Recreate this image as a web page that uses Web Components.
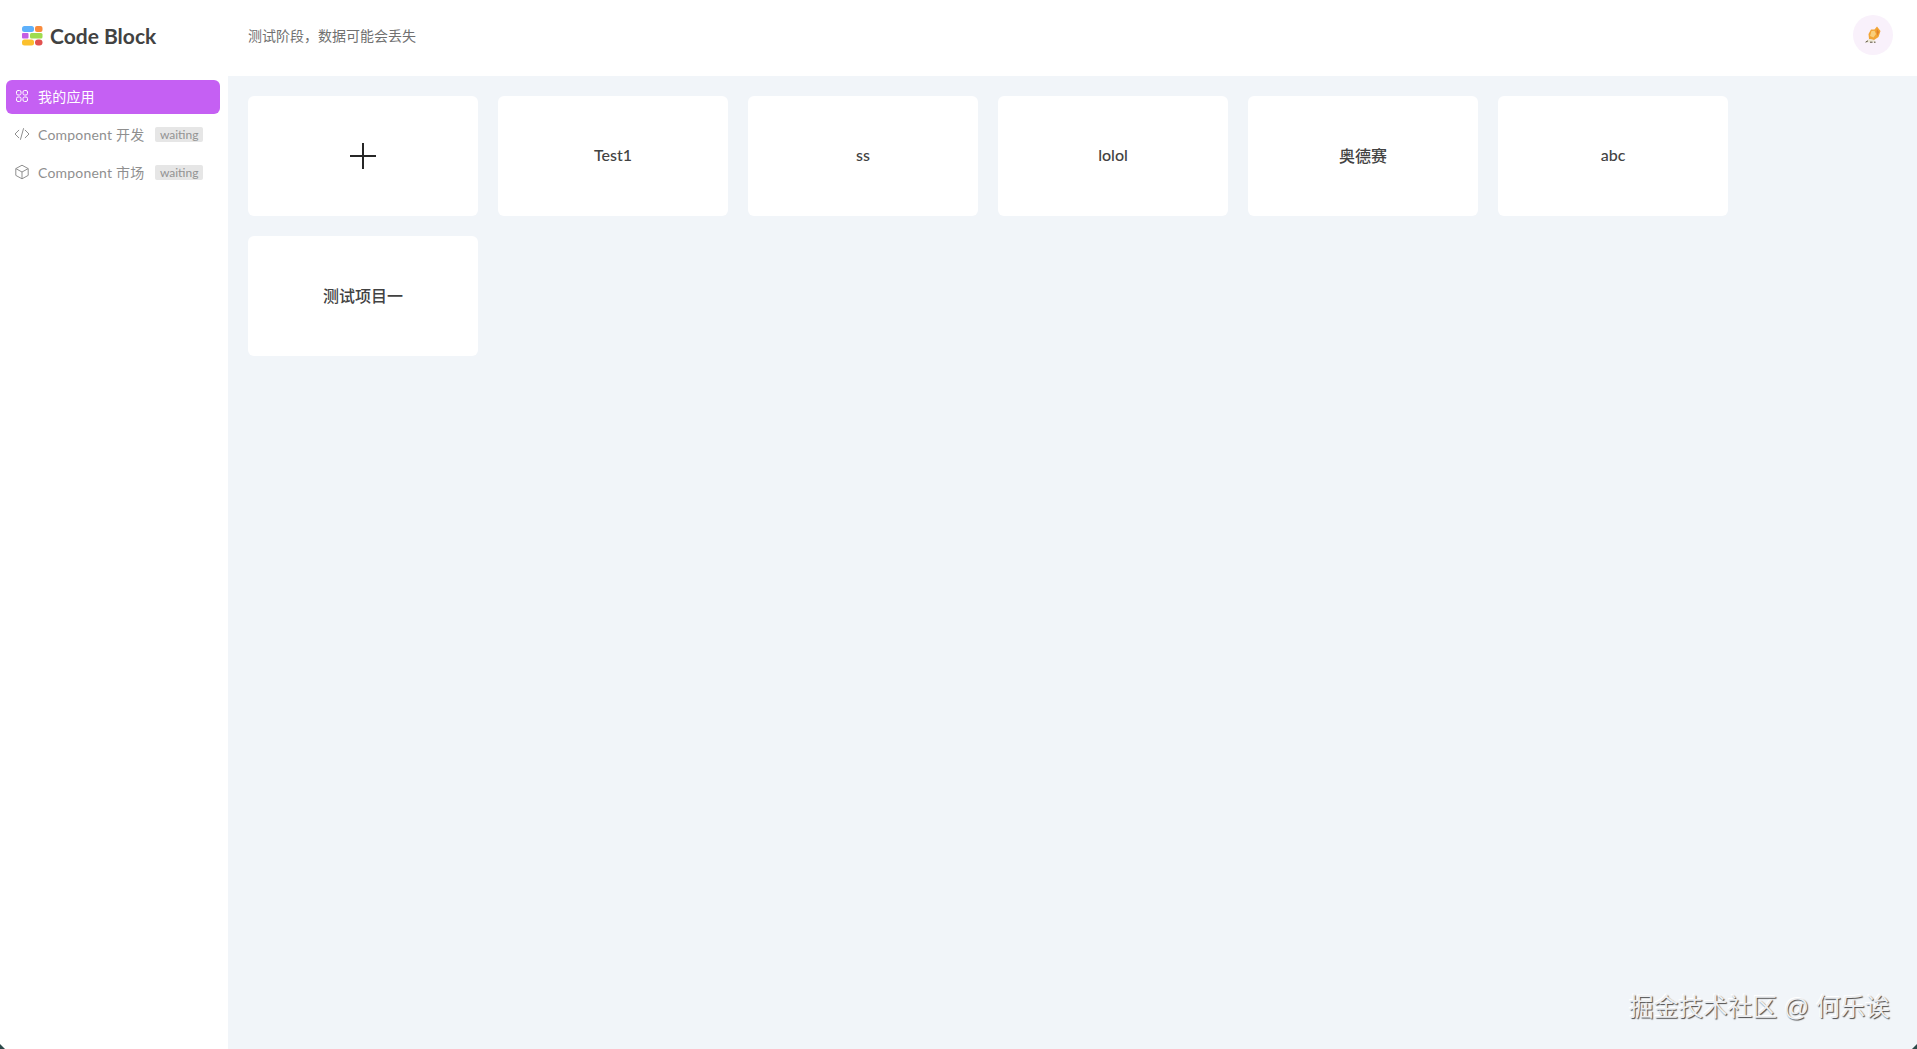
<!DOCTYPE html>
<html lang="zh">
<head>
<meta charset="utf-8">
<title>Code Block</title>
<style>
  html, body {
    margin: 0;
    height: 100%;
    overflow: hidden;
  }
  body {
    font-family: Lato, "Noto Sans CJK SC", sans-serif;
  }
</style>
</head>
<body>
<app-shell>
  <app-header slot="header"></app-header>
  <app-sidebar slot="sidebar">
    <nav-item active label="我的应用" icon="grid"></nav-item>
    <nav-item label="Component 开发" icon="code" badge="waiting"></nav-item>
    <nav-item label="Component 市场" icon="box" badge="waiting"></nav-item>
  </app-sidebar>
  <project-card add></project-card>
  <project-card>Test1</project-card>
  <project-card>ss</project-card>
  <project-card>lolol</project-card>
  <project-card>奥德赛</project-card>
  <project-card>abc</project-card>
  <project-card>测试项目一</project-card>
  <water-mark slot="overlay">掘金技术社区 @ 何乐诶</water-mark>
</app-shell>

<script>
const icons = {
  grid: `<svg viewBox="0 0 16 16" fill="none" stroke="currentColor" stroke-width="1">
      <rect x="2.5" y="2.5" width="4.5" height="4.5" rx="1.5"/><rect x="9" y="2.5" width="4.5" height="4.5" rx="1.5"/>
      <rect x="2.5" y="9" width="4.5" height="4.5" rx="1.5"/><rect x="9" y="9" width="4.5" height="4.5" rx="1.5"/></svg>`,
  code: `<svg viewBox="0 0 16 16" fill="none" stroke="currentColor" stroke-width="1" stroke-linecap="round" stroke-linejoin="round">
      <path d="M4.8 4.2 1 8l3.8 3.8"/><path d="M11.2 4.2 15 8l-3.8 3.8"/><path d="M9.5 2.6 6.5 13.4"/></svg>`,
  box: `<svg viewBox="0 0 16 16" fill="none" stroke="currentColor" stroke-width="1" stroke-linejoin="round">
      <path d="M8 1.2 14.2 4.6v6.8L8 14.8 1.8 11.4V4.6z"/><path d="M1.8 4.6 8 8l6.2-3.4M8 8v6.8"/></svg>`
};

class AppShell extends HTMLElement {
  constructor() {
    super();
    const root = this.attachShadow({ mode: "open" });
    root.innerHTML = `
      <style>
        :host {
          display: grid;
          grid-template-rows: 76px 1fr;
          grid-template-columns: 228px 1fr;
          height: 1049px;
          position: relative;
          background-color: #f1f5f9;
        }
        ::slotted([slot="header"]) {
          grid-column: 1 / 3;
        }
        main {
          display: flex;
          flex-wrap: wrap;
          align-content: flex-start;
          gap: 20px;
          padding: 20px;
        }
        .corner {
          position: absolute;
          bottom: 0;
          width: 5px;
          height: 5px;
          background-color: #2c4a4a;
        }
        .corner.left {
          left: 0;
          clip-path: polygon(0 0, 100% 100%, 0 100%);
        }
        .corner.right {
          right: 0;
          clip-path: polygon(100% 0, 100% 100%, 0 100%);
        }
      </style>
      <slot name="header"></slot>
      <slot name="sidebar"></slot>
      <main><slot></slot></main>
      <slot name="overlay"></slot>
      <span class="corner left"></span>
      <span class="corner right"></span>`;
  }
}

class AppHeader extends HTMLElement {
  constructor() {
    super();
    const root = this.attachShadow({ mode: "open" });
    root.innerHTML = `
      <style>
        :host {
          display: flex;
          align-items: center;
          background-color: #fff;
          padding: 0 24px 6px 22px;
        }
        .logo {
          display: flex;
          align-items: center;
          gap: 7px;
          width: 226px;
          color: #424242;
          font-size: 21px;
          font-weight: 700;
        }
        svg.mark {
          width: 21px;
          height: 21px;
          display: block;
        }
        .notice {
          flex: 1;
          font-size: 14px;
          color: #707070;
        }
        .avatar {
          width: 40px;
          height: 40px;
          border-radius: 50%;
          background-color: #f9f1fb;
          display: flex;
          align-items: center;
          justify-content: center;
        }
        .avatar svg {
          width: 16px;
          height: 18px;
          display: block;
        }
      </style>
      <div class="logo">
        <svg class="mark" viewBox="0 0 21 21">
          <rect x="0" y="1" width="12" height="6" rx="2.5" fill="#5eb1fb"/>
          <rect x="13" y="1" width="7.5" height="6" rx="2" fill="#f98b3d"/>
          <rect x="0" y="8" width="6.5" height="5.5" rx="1" fill="#c45fe3"/>
          <rect x="8" y="8" width="12.5" height="5.5" rx="1.5" fill="#9fdc4f"/>
          <rect x="0" y="14.5" width="12" height="6" rx="2.5" fill="#fbc02d"/>
          <rect x="13" y="14.5" width="7.5" height="6" rx="3" fill="#e2514f"/>
        </svg>
        <span>Code Block</span>
      </div>
      <div class="notice">测试阶段，数据可能会丢失</div>
      <div class="avatar">
        <svg viewBox="0 0 16 18">
          <path d="M12 .5 15.5 5 13.5 11 9 14 4 13 3.5 8 6 3.5 9.5 3.5z" fill="#f2a535"/>
          <path d="M6.5 5 9.5 4.8 11 8 8.5 11.5 5 10z" fill="#f9cf7c"/>
          <path d="M12 3 14 6 12.5 10 11.5 6z" fill="#e2822a"/>
          <path d="M.5 15.5 4 13 9 14 11 16.5H1z" fill="#ece7d6"/>
          <path d="M.6 16.2 3 14.8M5 16.2h2.5M9 16.2h1.5" stroke="#5a5140" stroke-width="1" fill="none"/>
        </svg>
      </div>`;
  }
}

class AppSidebar extends HTMLElement {
  constructor() {
    super();
    const root = this.attachShadow({ mode: "open" });
    root.innerHTML = `
      <style>
        :host {
          display: flex;
          flex-direction: column;
          gap: 4px;
          background-color: #fff;
          padding: 4px 8px 0 6px;
        }
      </style>
      <slot></slot>`;
  }
}

class NavItem extends HTMLElement {
  constructor() {
    super();
    this.attachShadow({ mode: "open" });
  }
  connectedCallback() {
    const badge = this.getAttribute("badge");
    this.shadowRoot.innerHTML = `
      <style>
        :host {
          display: flex;
          align-items: center;
          height: 34px;
          box-sizing: border-box;
          padding: 0 0 2px 8px;
          border-radius: 6px;
          color: #8f8f8f;
          font-size: 14px;
          letter-spacing: .2px;
          white-space: nowrap;
        }
        :host([active]) {
          background-color: #c560f3;
          color: #fff;
        }
        .icon {
          width: 16px;
          height: 16px;
          margin-right: 8px;
          flex: none;
        }
        .icon svg {
          width: 100%;
          height: 100%;
          display: block;
        }
        .badge {
          margin-left: 11px;
          padding: 0 4.5px;
          height: 15px;
          line-height: 15px;
          font-size: 12px;
          letter-spacing: 0;
          background-color: #e6e6e6;
          color: #939393;
          border-radius: 2px;
        }
      </style>
      <span class="icon">${icons[this.getAttribute("icon")]}</span>
      <span>${this.getAttribute("label")}</span>
      ${badge ? `<span class="badge">${badge}</span>` : ""}`;
  }
}

class ProjectCard extends HTMLElement {
  constructor() {
    super();
    this.attachShadow({ mode: "open" });
  }
  connectedCallback() {
    const add = this.hasAttribute("add");
    const body = add
      ? `<svg viewBox="0 0 26 26" width="26" height="26"><path d="M13 0v26M0 13h26" stroke="#262626" stroke-width="2" fill="none"/></svg>`
      : `<slot></slot>`;
    this.shadowRoot.innerHTML = `
      <style>
        :host {
          display: flex;
          align-items: center;
          justify-content: center;
          width: 230px;
          height: 120px;
          box-sizing: border-box;
          padding-bottom: ${add ? 0 : 3}px;
          background-color: #fff;
          border-radius: 6px;
          color: #424242;
          font-size: 16px;
          font-weight: 500;
        }
      </style>
      ${body}`;
  }
}

class WaterMark extends HTMLElement {
  constructor() {
    super();
    const root = this.attachShadow({ mode: "open" });
    root.innerHTML = `
      <style>
        :host {
          position: absolute;
          right: 27px;
          bottom: 26px;
          font-family: "Liberation Sans", "Noto Sans CJK SC", sans-serif;
          font-size: 24.7px;
          color: #eceef1;
          text-shadow: 1px 1px 1px #4a4a4a, -1px -1px 0 #fff;
          white-space: nowrap;
        }
      </style>
      <slot></slot>`;
  }
}

customElements.define("app-shell", AppShell);
customElements.define("app-header", AppHeader);
customElements.define("app-sidebar", AppSidebar);
customElements.define("nav-item", NavItem);
customElements.define("project-card", ProjectCard);
customElements.define("water-mark", WaterMark);
</script>
</body>
</html>
